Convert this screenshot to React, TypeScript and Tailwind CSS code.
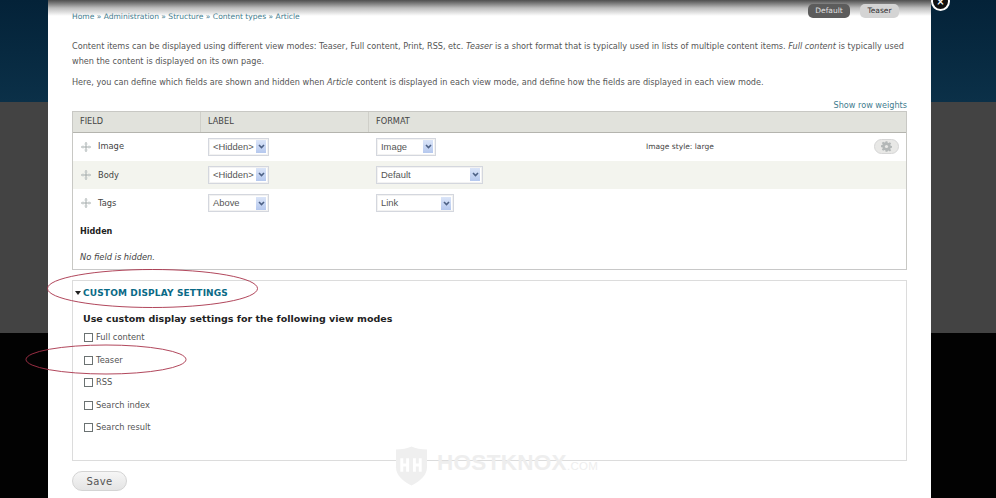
const font = { fontFamily: '"DejaVu Sans", sans-serif' };

function Sel({ w, text }: { w: string; text: string }) {
  return (
    <div className={`${w} h-[18px] flex items-center justify-between border border-[#d4d7de] bg-white pl-[4px] pr-[2px] text-[9.4px] text-[#555] [font-family:'Liberation_Sans',sans-serif] shadow-[inset_0_0_0_1px_#f2f2f2]`}>
      <span>{text}</span>
      <span className="w-[10px] h-[13px] bg-gradient-to-b from-[#dbe5f8] to-[#b5c8ee] flex items-center justify-center">
        <svg width="7" height="5" viewBox="0 0 7 5"><path d="M1 1l2.5 2.5L6 1" fill="none" stroke="#4d6185" strokeWidth="1.6" /></svg>
      </span>
    </div>
  );
}

function Drag() {
  return (
    <svg width="10" height="10" viewBox="0 0 10 10" className="shrink-0">
      <path d="M5 0v10M0 5h10" stroke="#a3aaaa" strokeWidth="1" />
      <path d="M3.5 2h3M3.5 8h3M2 3.5v3M8 3.5v3" stroke="#c4cbcb" strokeWidth="1" />
    </svg>
  );
}

function Row({ name, label, fmt, fw, bg, extra }: { name: string; label: string; fmt: string; fw: string; bg: string; extra?: boolean }) {
  return (
    <div className={`h-[28.3px] flex items-center ${bg}`}>
      <div className="w-[128px] flex items-center pl-[8px] gap-[7px] text-[8.3px] text-[#444]"><Drag /><span>{name}</span></div>
      <div className="w-[168px] pl-[7px]"><Sel w="w-[61px]" text={label} /></div>
      <div className="w-[277px] pl-[7px]"><Sel w={fw} text={fmt} /></div>
      {extra && (
        <>
          <span className="w-[228px] text-[7.5px] text-[#444]">Image style: large</span>
          <span className="w-[25px] h-[15px] rounded-full bg-[#e8e8e6] border border-[#d6d6d6] flex items-center justify-center">
            <svg width="11" height="11" viewBox="0 0 24 24" fill="#b4b8b8"><path d="M10 1h4l.6 3.2 2 .8L19.4 3l2.8 2.8-2 2.8.8 2 3 .6v4l-3 .6-.8 2 2 2.8-2.8 2.8-2.8-2-2 .8L14 24h-4l-.6-3.2-2-.8-2.8 2-2.8-2.8 2-2.8-.8-2L0 14v-4l3-.6.8-2-2-2.8L4.6 2l2.8 2 2-.8z" transform="translate(0 -.5)" /><circle cx="12" cy="12" r="3.5" fill="#e8e8e6" /></svg>
          </span>
        </>
      )}
    </div>
  );
}

function Check({ text }: { text: string }) {
  return (
    <div className="h-[22.5px] flex items-center gap-[3px] pl-[1px] text-[#555] text-[8.3px]">
      <span className="w-[7px] h-[7px] border border-[#6b7272] bg-white box-content" />
      <span>{text}</span>
    </div>
  );
}

export default function App() {
  return (
    <div className="relative w-[996px] h-[498px] overflow-hidden text-[8.15px] text-[#444]" style={font}>
      <div className="flex flex-col h-full">
        <div className="h-[102px] bg-gradient-to-b from-[#042238] to-[#0b3048]" />
        <div className="h-[231px] bg-[#434343]" />
        <div className="flex-1 bg-[#020202]" />
      </div>

      <div className="absolute left-[48px] top-0 w-[883px] h-[498px] bg-white">
        <div className="absolute inset-x-0 top-0 h-[16px] bg-gradient-to-b from-[#4f4f4f] via-[#bdbdbd] to-white" />
        <div className="relative px-[24px]">
          <div className="flex justify-between h-[24px] items-start">
            <div className="pt-[11px] text-[7.55px] text-[#3f7c8e] leading-[11px]">Home » Administration » Structure » Content types » Article</div>
            <div className="flex gap-[10px] pt-[3.5px] pr-[8px] text-[7.5px]">
              <span className="w-[42px] h-[14px] rounded-[5px] bg-[#5c5c5c] text-[#e0e0e0] flex items-center justify-center">Default</span>
              <span className="w-[39px] h-[14px] rounded-[5px] bg-[#d4d4d4] text-[#333] flex items-center justify-center">Teaser</span>
            </div>
          </div>
          <p className="mt-[15px] leading-[14.5px] text-[#555]">
            Content items can be displayed using different view modes: Teaser, Full content, Print, RSS, etc. <em>Teaser</em> is a short format that is typically used in lists of multiple content items. <em>Full content</em> is typically used when the content is displayed on its own page.
          </p>
          <p className="mt-[7px] leading-[14.5px] text-[#555]">
            Here, you can define which fields are shown and hidden when <em>Article</em> content is displayed in each view mode, and define how the fields are displayed in each view mode.
          </p>
          <div className="text-right text-[#3f7c8e] mt-[10px] leading-[11px]">Show row weights</div>

          <div className="border border-[#c8c8c4] border-b-[#c8c8c8]">
            <div className="h-[21px] flex items-center bg-[#e1e2dc] border-b border-[#b4b4ae] text-[#444] text-[8.2px]">
              <div className="w-[128px] h-full flex items-center pl-[7px] border-r border-[#cfcfc9]">FIELD</div>
              <div className="w-[168px] h-full flex items-center pl-[7px] border-r border-[#cfcfc9]">LABEL</div>
              <div className="flex-1 pl-[7px]">FORMAT</div>
            </div>
            <Row name="Image" label="<Hidden>" fmt="Image" fw="w-[60px]" bg="bg-white" extra />
            <Row name="Body" label="<Hidden>" fmt="Default" fw="w-[107px]" bg="bg-[#f3f4ee]" />
            <Row name="Tags" label="Above" fmt="Link" fw="w-[78px]" bg="bg-white" />
            <div className="h-[28px] flex items-center pl-[7px] font-bold text-[#222] text-[8.1px]">Hidden</div>
            <div className="h-[24px] flex items-center pl-[7px] italic text-[#444] text-[8.3px]">No field is hidden.</div>
          </div>

          <div className="mt-[10px] h-[181px] border border-[#dcdcdc] pt-[5px]">
            <div className="flex items-center gap-[2px] pl-[2px] h-[14px] font-bold text-[#0a6a86] text-[9px] tracking-[0.15px]">
              <svg width="6" height="4" viewBox="0 0 6 4"><path d="M0 0h6L3 4z" fill="#222" /></svg>
              <span>CUSTOM DISPLAY SETTINGS</span>
            </div>
            <div className="pl-[10px]">
              <div className="mt-[13px] font-bold text-[#222] text-[9.5px] leading-[12px]">Use custom display settings for the following view modes</div>
              <div className="mt-[1px]">
                <Check text="Full content" />
                <Check text="Teaser" />
                <Check text="RSS" />
                <Check text="Search index" />
                <Check text="Search result" />
              </div>
            </div>
          </div>

          <button className="mt-[10px] w-[55px] h-[20px] rounded-full bg-gradient-to-b from-[#f6f6f6] to-[#e4e4e4] border border-[#d4d4d4] text-[#555] text-[10px] tracking-[0.4px]">Save</button>
        </div>
      </div>

      <span className="absolute left-[931px] top-[-8px] w-[15px] h-[15px] rounded-full bg-[#111] border-[2px] border-white box-content flex items-center justify-center text-white text-[10px] leading-none font-bold">×</span>

      <svg className="absolute left-0 top-0 pointer-events-none" width="996" height="498" fill="none">
        <ellipse cx="152.5" cy="288.5" rx="105" ry="19" stroke="#a8324a" strokeWidth="0.9" />
        <ellipse cx="106" cy="359.5" rx="80" ry="14.5" stroke="#a8324a" strokeWidth="0.9" />
      </svg>

      <div className="absolute left-[395px] top-[446px] flex items-start gap-[9px] text-[#eeeeee] pointer-events-none">
        <svg width="33" height="40" viewBox="0 0 34 40"><path d="M1 3c6 0 12-1 16-3 4 2 10 3 16 3v18c0 9-8 15-16 19C9 36 1 30 1 21z" fill="#efefef" /><path d="M7 12v14M13 12v14M7 19h6M20 12v14M26 12v14M20 19h6" stroke="#fff" strokeWidth="3" /></svg>
        <span className="mt-[4px] font-bold text-[22.5px] leading-[26px] tracking-[0.3px] [font-family:'Liberation_Sans',sans-serif]">HOSTKNOX<span className="text-[11.5px] font-normal">.COM</span></span>
      </div>
    </div>
  );
}
